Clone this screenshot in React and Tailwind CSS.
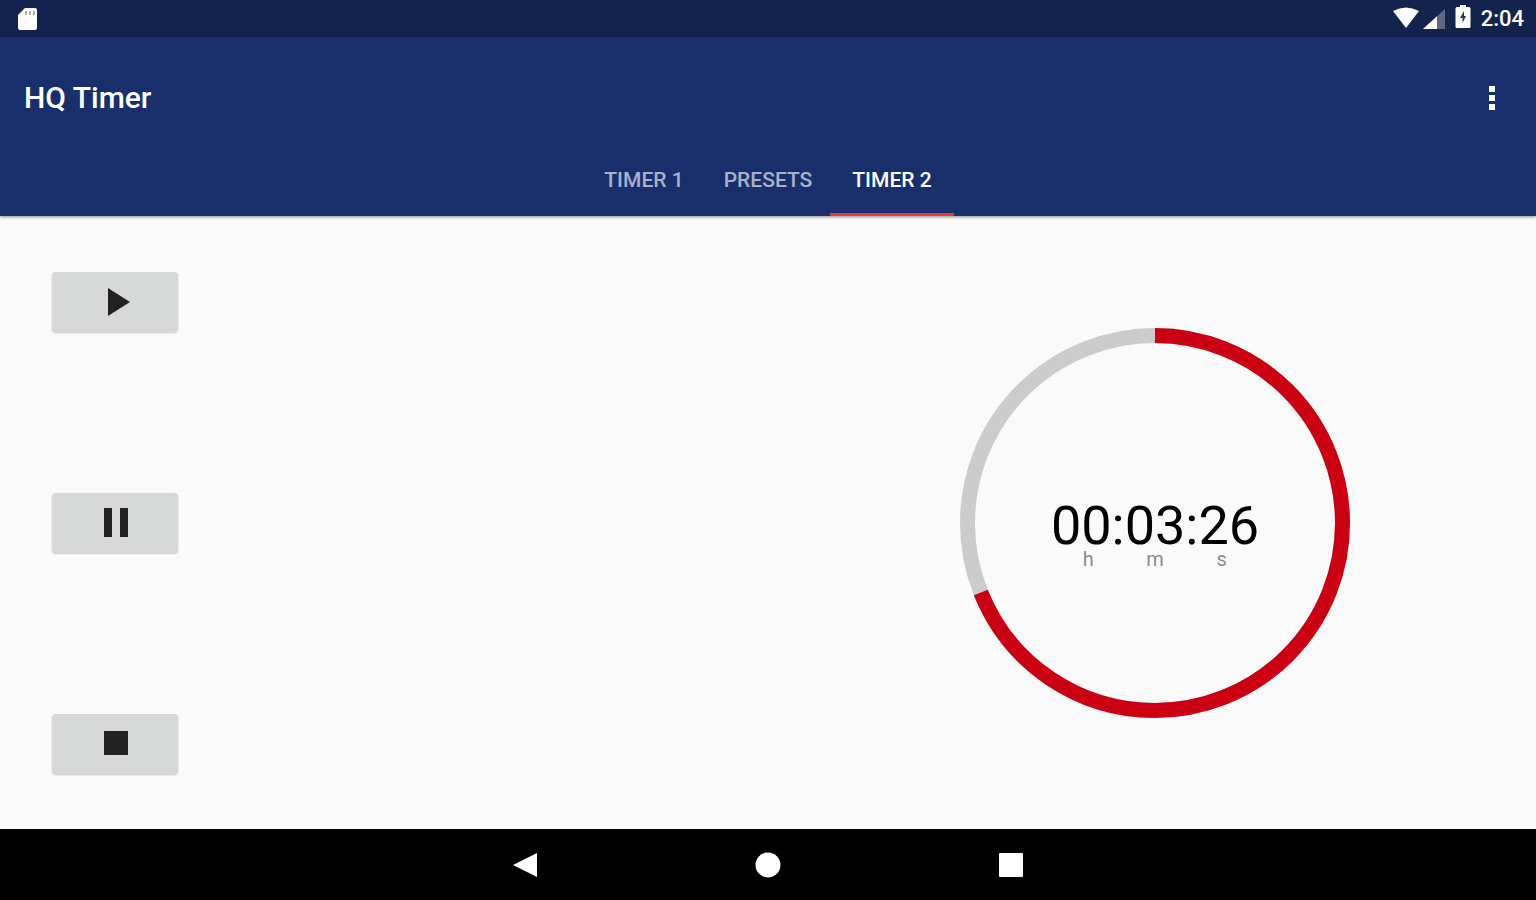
import { useState } from "react";

const TABS = ["Timer 1", "Presets", "Timer 2"];
const TOTAL_SECONDS = 300;
const REMAINING_SECONDS = 206.8;

function StatusBar() {
  return (
    <div className="flex h-[37px] items-center justify-between bg-[#14234d] pr-3 pl-4 text-white">
      <svg className="h-6 w-6" viewBox="0 0 24 24" aria-hidden="true">
        <path d="M9 1h10a2 2 0 0 1 2 2v18a2 2 0 0 1-2 2H4a2 2 0 0 1-2-2V8z" fill="#fff" />
        <path d="M9 4h2v4H9zM13 4h2v4h-2zM17 4h2v4h-2z" fill="#a9adb8" />
      </svg>
      <div className="flex items-center">
        <svg className="h-6 w-[26px]" viewBox="0 0 26 24" aria-hidden="true">
          <path d="M0 4Q13-3 26 4L13 21z" fill="#fff" />
        </svg>
        <svg className="ml-1 h-6 w-[22px]" viewBox="0 0 22 24" aria-hidden="true">
          <path d="M22 2v20H0z" fill="#5d6784" />
          <path d="M14 9.300V22H0z" fill="#fff" />
        </svg>
        <svg className="ml-[10px] h-7 w-4" viewBox="0 0 16 28" aria-hidden="true">
          <path d="M5 0h6v2h3a1.500 1.500 0 0 1 1.500 1.500v18A1.500 1.500 0 0 1 14 23H2a1.500 1.500 0 0 1-1.500-1.500v-18A1.500 1.500 0 0 1 2 2h3z" fill="#fff" />
          <path d="M9 6l-4 7h2.500v5l3.500-7H9z" fill="#2b3858" />
        </svg>
        <span className="ml-[10px] text-[22px] leading-6 font-medium">2:04</span>
      </div>
    </div>
  );
}

function AppBar({ active, onSelect }) {
  return (
    <header className="z-10 bg-[#192f6b] pt-[13px] shadow-[0_1px_3px_rgba(0,0,0,0.45)]">
      <div className="flex h-24 items-center justify-between pr-5 pl-6">
        <h1 className="text-[30px] leading-9 font-medium text-white">HQ Timer</h1>
        <button type="button" aria-label="More options" className="flex size-12 items-center justify-center">
          <svg className="h-6 w-6" viewBox="0 0 24 24" fill="#fff" aria-hidden="true">
            <path d="M9 0h6v6H9zM9 9h6v6H9zM9 18h6v6H9z" />
          </svg>
        </button>
      </div>
      <div role="tablist" className="flex h-[70px] justify-center">
        {TABS.map((tab) => (
          <button
            key={tab}
            type="button"
            role="tab"
            aria-selected={tab === active}
            onClick={() => onSelect(tab)}
            className={
              "w-[124px] border-y-[3px] border-t-transparent text-[21px] font-medium uppercase " +
              (tab === active ? "border-b-[#e53935] text-white" : "border-b-transparent text-[#a9b1ca]")
            }
          >
            {tab}
          </button>
        ))}
      </div>
    </header>
  );
}

function ControlButton({ label, path }) {
  return (
    <button
      type="button"
      aria-label={label}
      className="flex h-[60px] w-[126px] items-center justify-center rounded-sm bg-[#d6d8d7] shadow-[0_1px_2px_rgba(0,0,0,0.2)]"
    >
      <svg className="size-8" viewBox="0 0 32 32" fill="#212121" aria-hidden="true">
        <path d={path} />
      </svg>
    </button>
  );
}

function Countdown() {
  const radius = 187.5;
  const length = 2 * Math.PI * radius;
  const elapsed = (REMAINING_SECONDS / TOTAL_SECONDS) * length;
  return (
    <div className="grid place-items-center">
      <svg className="col-start-1 row-start-1 size-[390px]" viewBox="0 0 390 390" fill="none" strokeWidth="15" aria-hidden="true">
        <circle cx="195" cy="195" r={radius} stroke="#cccccc" />
        <circle
          cx="195"
          cy="195"
          r={radius}
          stroke="#cb0013"
          strokeDasharray={`${elapsed} ${length}`}
          transform="rotate(-90 195 195)"
        />
      </svg>
      <div className="col-start-1 row-start-1 flex flex-col items-center pt-6">
        <div role="timer" className="text-[54px] leading-[48px] text-black">00:03:26</div>
        <div className="grid w-[200px] grid-cols-3 text-center text-[20px] leading-[18px] text-[#8c8c8c]">
          <span>h</span>
          <span>m</span>
          <span>s</span>
        </div>
      </div>
    </div>
  );
}

function NavigationBar() {
  const items = [
    ["Back", <path key="p" d="M24 0v24L0 12z" />],
    ["Home", <circle key="c" cx="12" cy="12" r="12.500" />],
    ["Recent apps", <rect key="r" width="24" height="24" rx="1" />],
  ];
  return (
    <nav className="flex h-[71px] justify-center bg-black">
      {items.map(([label, shape]) => (
        <button key={label} type="button" aria-label={label} className="flex w-[243px] items-center justify-center">
          <svg className="size-6 overflow-visible" viewBox="0 0 24 24" fill="#fff" aria-hidden="true">
            {shape}
          </svg>
        </button>
      ))}
    </nav>
  );
}

export default function App() {
  const [active, setActive] = useState("Timer 2");
  return (
    <div className="flex min-h-screen flex-col bg-[#fafafa] font-[Roboto,sans-serif]">
      <StatusBar />
      <AppBar active={active} onSelect={setActive} />
      <main className="grid flex-1 grid-cols-2 gap-3">
        <div className="flex flex-col justify-between pt-14 pb-[55px] pl-[52px]">
          <ControlButton label="Start" path="M9 2l22 14L9 30z" />
          <ControlButton label="Pause" path="M5 1h8v29H5zM21 1h8v29h-8z" />
          <ControlButton label="Stop" path="M5 3h24v24H5z" />
        </div>
        <Countdown />
      </main>
      <NavigationBar />
    </div>
  );
}
